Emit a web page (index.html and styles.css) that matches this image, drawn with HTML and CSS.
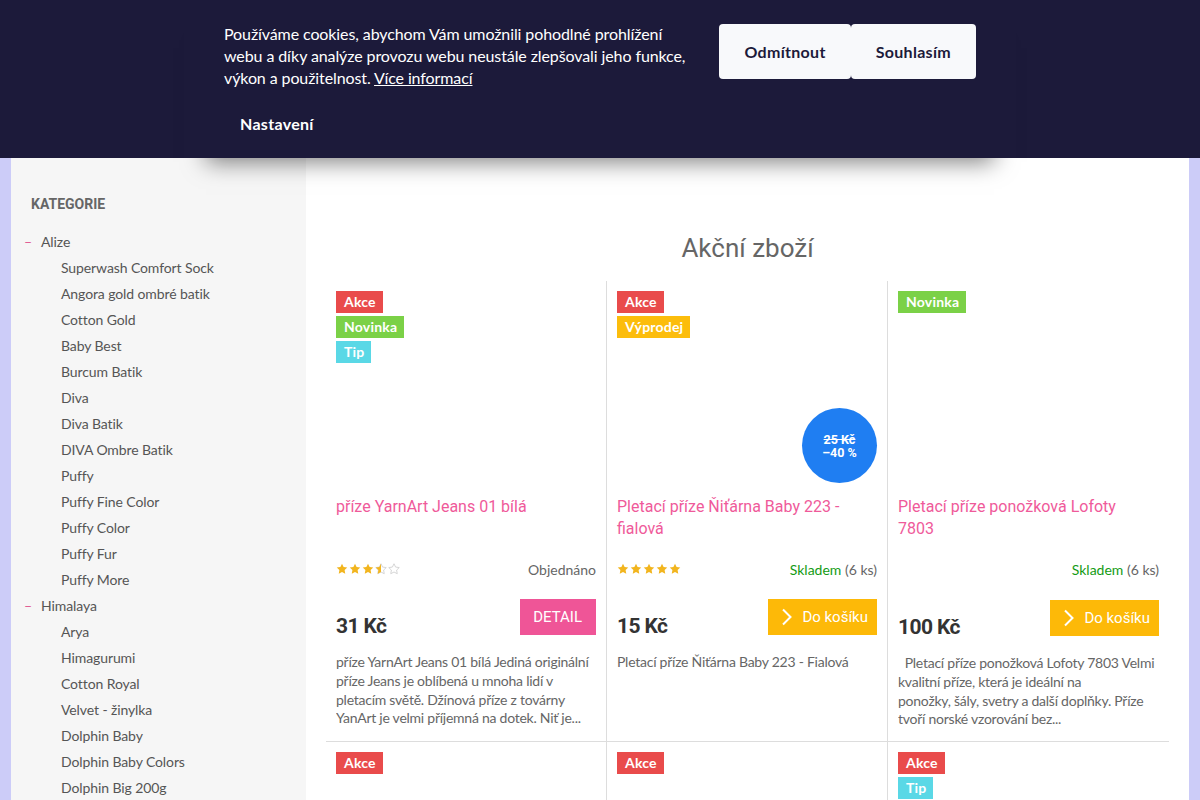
FILE: index.html
```html
<!DOCTYPE html>
<html lang="cs">
<head>
<meta charset="utf-8">
<title>Akční zboží</title>
<link rel="stylesheet" href="styles.css">
</head>
<body>
<svg class="defs" width="0" height="0" aria-hidden="true">
  <defs>
    <symbol id="star" viewBox="0 0 24 24"><path d="M12 1.5l3.2 6.6 7.3 1-5.3 5.1 1.3 7.2L12 18l-6.5 3.4 1.3-7.2L1.5 9.1l7.3-1z"/></symbol>
    <clipPath id="half"><rect x="0" y="0" width="12" height="24"/></clipPath>
  </defs>
</svg>

<div class="cookie-bar">
  <div class="cookie-box">
    <div class="cookie-row">
      <p class="cookie-text">Používáme cookies, abychom Vám umožnili pohodlné prohlížení webu a díky analýze provozu webu neustále zlepšovali jeho funkce, výkon a použitelnost. <a href="#">Více informací</a></p>
      <div class="cookie-buttons">
        <button class="cbtn">Odmítnout</button>
        <button class="cbtn">Souhlasím</button>
      </div>
    </div>
    <button class="cookie-settings">Nastavení</button>
  </div>
</div>

<div class="page">
  <aside class="sidebar">
    <h3 class="side-title">Kategorie</h3>
    <ul class="cats">
      <li class="cat"><span class="dash">–</span><a href="#">Alize</a>
        <ul class="sub">
          <li><a href="#">Superwash Comfort Sock</a></li>
          <li><a href="#">Angora gold ombré batik</a></li>
          <li><a href="#">Cotton Gold</a></li>
          <li><a href="#">Baby Best</a></li>
          <li><a href="#">Burcum Batik</a></li>
          <li><a href="#">Diva</a></li>
          <li><a href="#">Diva Batik</a></li>
          <li><a href="#">DIVA Ombre Batik</a></li>
          <li><a href="#">Puffy</a></li>
          <li><a href="#">Puffy Fine Color</a></li>
          <li><a href="#">Puffy Color</a></li>
          <li><a href="#">Puffy Fur</a></li>
          <li><a href="#">Puffy More</a></li>
        </ul>
      </li>
      <li class="cat"><span class="dash">–</span><a href="#">Himalaya</a>
        <ul class="sub">
          <li><a href="#">Arya</a></li>
          <li><a href="#">Himagurumi</a></li>
          <li><a href="#">Cotton Royal</a></li>
          <li><a href="#">Velvet - žinylka</a></li>
          <li><a href="#">Dolphin Baby</a></li>
          <li><a href="#">Dolphin Baby Colors</a></li>
          <li><a href="#">Dolphin Big 200g</a></li>
        </ul>
      </li>
    </ul>
  </aside>

  <main class="content">
    <h1 class="page-title">Akční zboží</h1>
    <div class="products">

      <div class="product">
        <div class="image">
          <div class="flags">
            <span class="flag akce">Akce</span>
            <span class="flag novinka">Novinka</span>
            <span class="flag tip">Tip</span>
          </div>
        </div>
        <a href="#" class="name">příze YarnArt Jeans 01 bílá</a>
        <div class="meta">
          <span class="stars">
            <svg class="st full"><use href="#star"/></svg><svg class="st full"><use href="#star"/></svg><svg class="st full"><use href="#star"/></svg><svg class="st halfst" viewBox="0 0 24 24"><use href="#star" class="empty-in"/><g clip-path="url(#half)"><use href="#star" class="fill-in"/></g></svg><svg class="st empty"><use href="#star"/></svg>
          </span>
          <span class="stock">Objednáno</span>
        </div>
        <div class="buy">
          <span class="price">31 Kč</span>
          <a href="#" class="btn-detail">DETAIL</a>
        </div>
        <p class="desc">příze YarnArt Jeans 01 bílá Jediná originální příze Jeans je oblíbená u mnoha lidí v pletacím světě. Džínová příze z továrny YanArt je velmi příjemná na dotek. Niť je...</p>
      </div>

      <div class="product">
        <div class="image">
          <div class="flags">
            <span class="flag akce">Akce</span>
            <span class="flag vyprodej">Výprodej</span>
          </div>
          <div class="discount"><s>25 Kč</s><span>–40 %</span></div>
        </div>
        <a href="#" class="name">Pletací příze Ňiťárna Baby 223 - fialová</a>
        <div class="meta">
          <span class="stars">
            <svg class="st full"><use href="#star"/></svg><svg class="st full"><use href="#star"/></svg><svg class="st full"><use href="#star"/></svg><svg class="st full"><use href="#star"/></svg><svg class="st full"><use href="#star"/></svg>
          </span>
          <span class="stock"><span class="in">Skladem</span> (6 ks)</span>
        </div>
        <div class="buy">
          <span class="price">15 Kč</span>
          <a href="#" class="btn-cart"><svg class="chev" viewBox="0 0 12 18"><path d="M2 1.5 9.5 9 2 16.5"/></svg>Do košíku</a>
        </div>
        <p class="desc">Pletací příze Ňiťárna Baby 223 - Fialová</p>
      </div>

      <div class="product">
        <div class="image">
          <div class="flags">
            <span class="flag novinka">Novinka</span>
          </div>
        </div>
        <a href="#" class="name">Pletací příze ponožková Lofoty 7803</a>
        <div class="meta">
          <span class="stock"><span class="in">Skladem</span> (6 ks)</span>
        </div>
        <div class="buy low">
          <span class="price">100 Kč</span>
          <a href="#" class="btn-cart"><svg class="chev" viewBox="0 0 12 18"><path d="M2 1.5 9.5 9 2 16.5"/></svg>Do košíku</a>
        </div>
        <p class="desc">&nbsp; Pletací příze ponožková Lofoty 7803 Velmi kvalitní příze, která je ideální na<br>ponožky, šály, svetry a další doplňky. Příze tvoří norské vzorování bez...</p>
      </div>

      <div class="product">
        <div class="image">
          <div class="flags">
            <span class="flag akce">Akce</span>
          </div>
        </div>
      </div>

      <div class="product">
        <div class="image">
          <div class="flags">
            <span class="flag akce">Akce</span>
          </div>
        </div>
      </div>

      <div class="product">
        <div class="image">
          <div class="flags">
            <span class="flag akce">Akce</span>
            <span class="flag tip">Tip</span>
          </div>
        </div>
      </div>

    </div>
  </main>
</div>
</body>
</html>
```

FILE: styles.css
```css
* { box-sizing: border-box; }

body {
  margin: 0;
  background: #ccccf8;
  font-family: Lato, "Noto Sans", sans-serif;
  color: #555;
}

.defs { position: absolute; width: 0; height: 0; }

a { text-decoration: none; color: inherit; }

/* Cookie bar */
.cookie-bar {
  position: relative;
  z-index: 2;
  background: #1c1a3a;
  height: 158px;
}

.cookie-box {
  width: 832px;
  height: 158px;
  margin: 0 auto;
  padding: 23px 40px 0;
  background: #1c1a3a;
  box-shadow: 0 26px 22px -22px rgba(0, 0, 0, 0.5);
}

.cookie-row {
  display: flex;
  align-items: flex-start;
}

.cookie-text {
  margin: 0;
  width: 472px;
  color: #fff;
  font-size: 16px;
  line-height: 22px;
  letter-spacing: -0.1px;
}

.cookie-text a {
  color: #fff;
  text-decoration: underline;
}

.cookie-buttons {
  display: flex;
  margin-left: auto;
  margin-top: 1px;
}

.cbtn {
  height: 55px;
  padding: 0 25px;
  border: 0;
  border-radius: 4px;
  background: #f8f9fb;
  color: #1c1a3a;
  font: 700 16px Lato, sans-serif;
  letter-spacing: 0.3px;
}

.cookie-settings {
  display: block;
  margin-top: 13px;
  padding: 12px 16px;
  border: 0;
  background: none;
  color: #fff;
  font: 700 16px/20px Lato, sans-serif;
  letter-spacing: 0.3px;
}

/* Page */
.page {
  width: 1178px;
  margin: 0 auto;
  display: flex;
}

.sidebar {
  width: 295px;
  flex: none;
  background: #f6f6f6;
  padding: 36px 0 40px;
}

.side-title {
  margin: 0 0 15px;
  padding-left: 20px;
  font: 700 14px/20px Roboto, sans-serif;
  text-transform: uppercase;
  color: #666;
}

.cats, .sub {
  list-style: none;
  margin: 0;
  padding: 0;
}

.cats {
  padding-left: 13px;
}

.cat, .sub li {
  font-size: 14px;
  line-height: 26px;
  color: #555;
  letter-spacing: -0.1px;
}

.dash {
  display: inline-block;
  width: 17px;
  color: #e0558f;
}

.sub {
  padding-left: 37px;
}

/* Content */
.content {
  flex: 1;
  background: #fff;
  padding: 72px 20px 0;
}

.page-title {
  margin: 0 0 15px;
  text-align: center;
  font: 400 26px/36px Roboto, sans-serif;
  color: #666;
}

.products {
  display: grid;
  grid-template-columns: repeat(3, 1fr);
}

.product {
  display: flex;
  flex-direction: column;
  padding: 10px 10px 11px;
  border-right: 1px solid #ddd;
  border-bottom: 1px solid #ddd;
}

.product:nth-child(3n) {
  border-right: 0;
}

.image {
  position: relative;
  height: 195px;
}

.flags {
  position: absolute;
  top: 0;
  left: 0;
  display: flex;
  flex-direction: column;
  align-items: flex-start;
  gap: 3px;
}

.flag {
  height: 22px;
  padding: 0 7px 0 8px;
  color: #fff;
  font: 700 14px/22px Lato, sans-serif;
  letter-spacing: 0.2px;
}

.akce { background: #e94b4b; }
.novinka { background: #7bd147; }
.tip { background: #5ad8e6; }
.vyprodej { background: #fcbd0c; }

.discount {
  position: absolute;
  right: 0;
  bottom: 3px;
  width: 75px;
  height: 75px;
  border-radius: 50%;
  background: #1f7ef2;
  color: #fff;
  display: flex;
  flex-direction: column;
  align-items: center;
  justify-content: center;
  font: 700 12.5px/13px Roboto, sans-serif;
}

.name {
  margin-top: 10px;
  height: 44px;
  padding-right: 14px;
  font: 400 16px/22px Roboto, sans-serif;
  color: #ef5a9a;
}

.meta {
  margin-top: 19px;
  height: 20px;
  display: flex;
  align-items: center;
  justify-content: space-between;
  font-size: 14px;
}

.stars {
  display: flex;
  gap: 1px;
}

.st {
  width: 12px;
  height: 12px;
}

.st.full { fill: #f2b51e; }
.st.empty { fill: none; stroke: #ccc; stroke-width: 1.6px; }
.halfst .empty-in { fill: none; stroke: #ccc; stroke-width: 1.6px; }
.halfst .fill-in { fill: #f2b51e; }

.stock {
  margin-left: auto;
  color: #666;
}

.in { color: #149b14; }

.buy {
  margin-top: 20px;
  display: flex;
  align-items: flex-end;
  justify-content: space-between;
}

.buy.low {
  margin-top: 21px;
}

.price {
  font: 700 21px/24px Roboto, sans-serif;
  letter-spacing: -0.6px;
  color: #333;
  margin-bottom: -3px;
}

.btn-detail {
  height: 36px;
  padding: 0 14px 0 13px;
  background: #ef5597;
  color: #fff;
  font: 400 15px/36px Roboto, sans-serif;
}

.btn-cart {
  height: 36px;
  display: flex;
  align-items: center;
  gap: 9px;
  padding: 0 9px 0 13px;
  background: #fdb908;
  color: #fff;
  font: 400 15px/36px Roboto, sans-serif;
}

.chev {
  width: 12px;
  height: 18px;
  fill: none;
  stroke: #fff;
  stroke-width: 2;
}

.desc {
  margin: 18px 0 0;
  height: 76px;
  overflow: hidden;
  font-size: 14px;
  line-height: 18.8px;
  letter-spacing: -0.25px;
  color: #666;
}
```
